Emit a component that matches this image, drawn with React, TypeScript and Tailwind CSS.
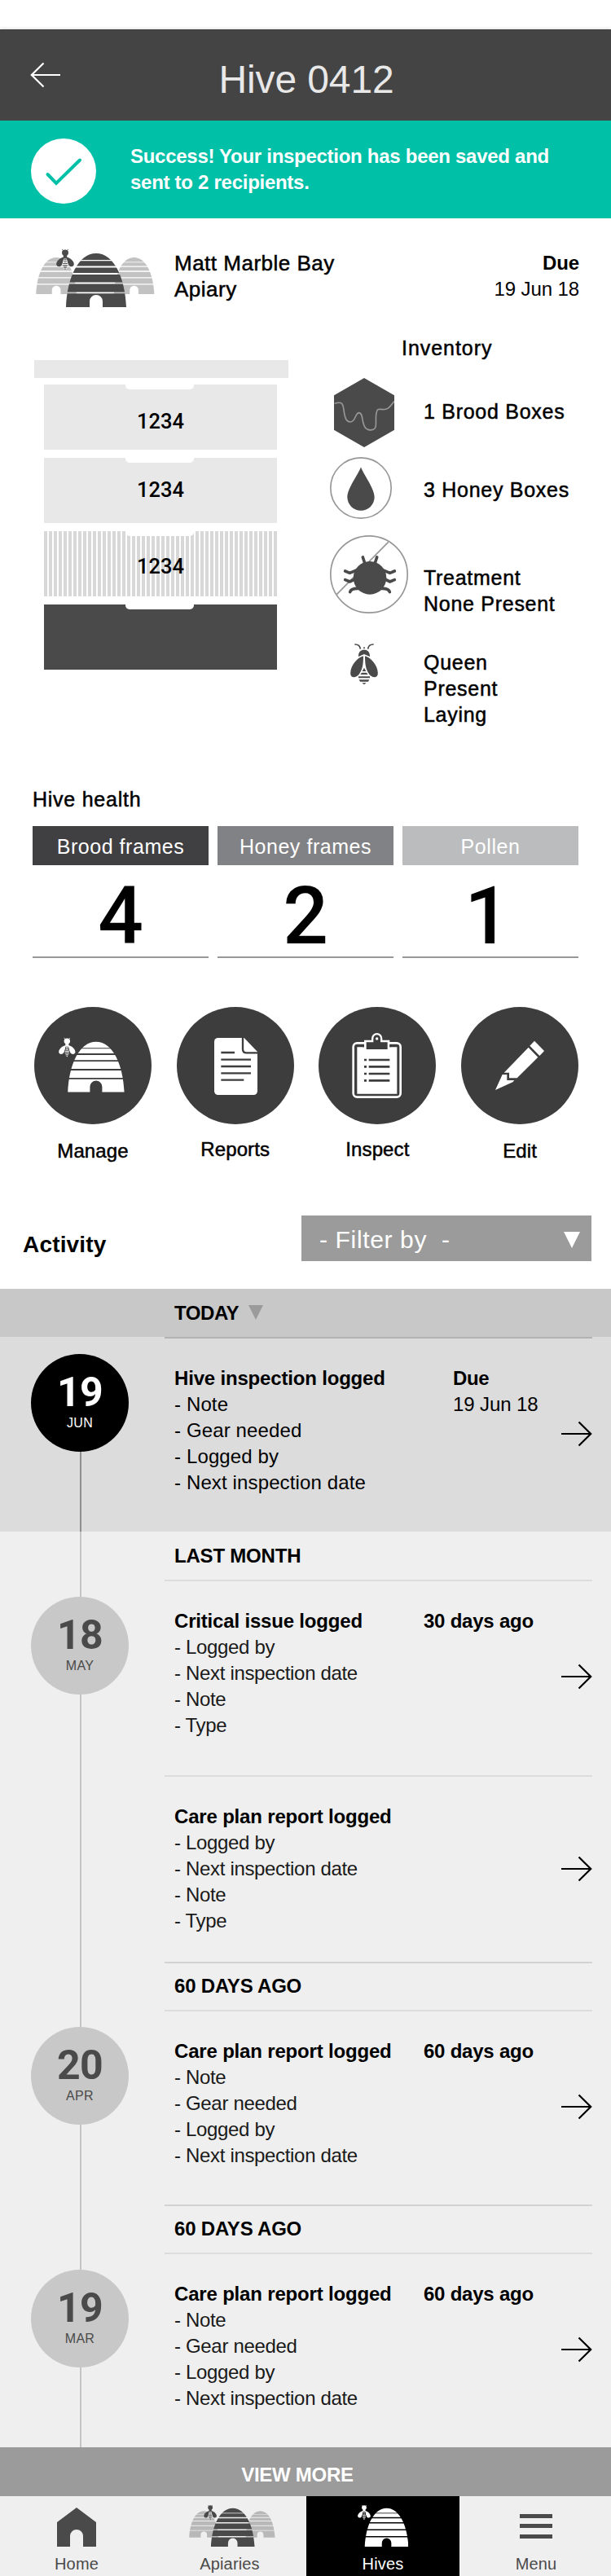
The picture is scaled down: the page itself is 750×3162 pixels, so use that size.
import React, { useId } from "react";

/* ---------- icons ---------- */

const HIVE_BANDS: [number, number][] = [
  [-1, 9],
  [9.2, 6.2],
  [17.4, 6.6],
  [26, 9.6],
  [37.6, 9.8],
  [49.3, 18],
];

function Hive({ color, transform }: { color: string; transform?: string }) {
  const id = useId();
  return (
    <g transform={transform}>
      <clipPath id={id}>
        {HIVE_BANDS.map(([y, h]) => (
          <rect key={y} x="-1" y={y} width="76" height={h} />
        ))}
      </clipPath>
      <path
        clipPath={`url(#${id})`}
        fill={color}
        d="M0 66C1.5 30 15 0 37 0S72.5 30 74 66H45V59a8 8 0 0 0-16 0V66Z"
      />
    </g>
  );
}

function SmallBee({ color, gap }: { color: string; gap: string }) {
  return (
    <g>
      <path d="M9 1.6 7 .3M13 1.6 15 .3" stroke={color} strokeWidth="0.8" fill="none" />
      <ellipse cx="11" cy="4.2" rx="4" ry="3.7" fill={color} />
      <path fill={color} d="M8.8 6h4.4v6H8.8z" />
      <path fill={color} d="M9.4 9.5C4.5 10.5 0 14.5.2 18.6c.2 3 4.6 3.8 6.6.6C8.2 17 9 13.5 9.4 9.5Z" />
      <path fill={color} d="M12.6 9.5c4.9 1 9.4 5 9.2 9.1-.2 3-4.6 3.8-6.6.6-1.4-2.2-2.2-5.7-2.6-9.7Z" />
      <path fill={gap} d="M9.3 11.5h3.4l2 7.5-2.2 5h-3l-2.2-5z" />
      <path
        fill={color}
        d="M9.5 12.3h3v1.2h-3zM9.2 14.7h3.6v1H9.2zM8.3 16.9h5.4v1.2H8.3zM8 19.2h6l-.3 1.2H8.3zM8.8 21.5h4.4l-.6 1.2H9.4zM10 23.6h2l-1 1.4z"
      />
    </g>
  );
}

function ApiaryIcon({ className, side, gap }: { className: string; side: string; gap: string }) {
  return (
    <svg viewBox="0 0 146 71" className={className}>
      <Hive color={side} transform="translate(.3 10) scale(.67 .68)" />
      <Hive color={side} transform="translate(95.8 10) scale(.67 .68)" />
      <Hive color="#4a4a4a" transform="translate(37 5)" />
      <g transform="translate(25 0)">
        <SmallBee color="#4a4a4a" gap={gap} />
      </g>
    </svg>
  );
}

function Arrow({ back = false }: { back?: boolean }) {
  return (
    <svg viewBox="0 0 38 32" className="block h-8 w-[38px]" fill="none" stroke={back ? "#fff" : "#000"} strokeWidth="2.2">
      {back ? <path d="M37 16H2M16.5 1.5 1.8 16l14.7 14.5" /> : <path d="M0 16H36M21.5 1.5 36.2 16 21.5 30.5" />}
    </svg>
  );
}

function BroodIcon() {
  return (
    <svg viewBox="105 192 222 255" className="h-[85px] w-[74px]">
      <path fill="#4a4a4a" d="M216 192 327 256V383L216 447 105 383V256Z" />
      <path
        fill="none"
        stroke="#979797"
        strokeWidth="5"
        d="M107 286C134 277 138 286 141 310C145 340 150 353 165 354C185 354 182 321 197 320C211 320 207 345 215 365C222 385 240 385 248 382C268 377 254 345 262 317C266 299 278 312 298 306C311 302 316 289 327 278"
      />
    </svg>
  );
}

function HoneyIcon() {
  return (
    <svg viewBox="90 483 228 228" className="size-[76px]">
      <circle cx="204" cy="597" r="111.5" fill="none" stroke="#979797" strokeWidth="5" />
      <path fill="#4a4a4a" d="M204 520C212 545 254 598 254 631A50 49 0 0 1 154 631C154 598 196 545 204 520Z" />
    </svg>
  );
}

function MiteIcon() {
  return (
    <svg viewBox="90 770 288 288" className="size-24">
      <g fill="none" stroke="#979797" strokeWidth="5">
        <circle cx="234" cy="914" r="141.5" />
        <path d="M115 988 305 795" />
      </g>
      <circle cx="237" cy="927" r="61" fill="#4a4a4a" />
      <path
        fill="none"
        stroke="#4a4a4a"
        strokeWidth="11"
        strokeLinecap="round"
        strokeLinejoin="round"
        d="M218 872 211 851M256 872 263 851M146 902 163 909 195 896M328 902 311 909 279 896M146 934 163 941 185 930M328 934 311 941 289 930M164 979Q167 965 195 966M310 979Q307 965 279 966"
      />
    </svg>
  );
}

function QueenIcon() {
  return (
    <svg viewBox="164 1170 102 150" className="h-[50px] w-[34px]" fill="#4a4a4a">
      <path fill="none" stroke="#4a4a4a" strokeWidth="5" d="M180 1173Q199 1172 201 1190M250 1173Q231 1172 229 1190" />
      <circle cx="215" cy="1186" r="3" />
      <path d="M194 1218C192 1184 238 1184 236 1218L215 1209Z" />
      <path d="M212 1216C190 1221 161 1254 165 1284C169 1299 187 1295 196 1283C208 1268 212 1250 212 1216Z" />
      <path d="M218 1216C240 1221 269 1254 265 1284C261 1299 243 1295 234 1283C222 1268 218 1250 218 1216Z" />
      <path d="M215 1259 222 1272H208ZM206 1277H224L229 1284H201ZM194 1291H236V1297H194ZM196 1303H234L230 1310H200ZM207 1315H223L215 1321Z" />
    </svg>
  );
}

const ACTION_ICON = "size-36 rounded-full bg-[#3d3d3d]";

function ManageIcon() {
  return (
    <svg viewBox="36 -12 432 432" className={ACTION_ICON}>
      <g transform="translate(126 102) scale(2.81)">
        <Hive color="#fff" transform="translate(12 5)" />
        <SmallBee color="#fff" gap="#3d3d3d" />
      </g>
    </svg>
  );
}

function ReportsIcon() {
  return (
    <svg viewBox="560 -12 432 432" className={ACTION_ICON}>
      <path fill="#fff" d="M712 102H808L857 153V298a14 14 0 0 1-14 14H712a14 14 0 0 1-14-14V116a14 14 0 0 1 14-14Z" />
      <g fill="none" stroke="#3d3d3d" strokeWidth="7">
        <path d="M803 100V143Q803 157 817 157H860" />
        <path d="M723 156H773M723 182H833M723 207H833M723 232H833M723 257H807" />
      </g>
    </svg>
  );
}

function InspectIcon() {
  return (
    <svg viewBox="5 -12 432 432" className={ACTION_ICON}>
      <rect x="133" y="121" width="174" height="199" rx="14" fill="none" stroke="#fff" strokeWidth="8" />
      <path fill="#fff" d="M147 136H294V308H147Z" />
      <path fill="#fff" d="M173 110H200V104A20 20 0 0 1 240 104V110H267V138H173Z" />
      <path fill="#3d3d3d" d="M181 118H207V104A13 13 0 0 1 233 104V118H259V144H181Z" />
      <path fill="#3d3d3d" d="M167 126h6v10h-6zM267 126h6v10h-6z" />
      <circle cx="220" cy="105" r="5" fill="#fff" />
      <path
        stroke="#3d3d3d"
        strokeWidth="8"
        d="M173 183H182M190 183H267M173 208H182M190 208H267M173 234H182M190 234H267M173 259H182M190 259H267"
      />
    </svg>
  );
}

function EditIcon() {
  return (
    <svg viewBox="528 -12 432 432" className={ACTION_ICON}>
      <g fill="#fff">
        <path d="M798 113 834 150 817 168 781 131Z" />
        <path d="M776 137 811 173 734 250H705V230H686Z" />
        <path d="M680 237H697V258H724L718 265 654 294Z" />
      </g>
    </svg>
  );
}

/* ---------- hive stack ---------- */

const medium = "[-webkit-text-stroke:0.5px_#000]";
const boxNumber = "text-center font-['Roboto',sans-serif] text-[25.5px] leading-8 font-medium";

function Notch() {
  return <div className="ml-[100px] h-1.5 w-[84px] rounded-b-[5px] bg-white" />;
}

function HiveStack() {
  return (
    <div className="mt-[31px] w-[312px]">
      <div className="h-[22px] bg-[#e8e8e8]" />
      <div className="mt-2 ml-3 flex w-[286px] flex-col gap-2.5">
        <div className="h-20 bg-[#e8e8e8]">
          <Notch />
          <p className={`pt-[23px] ${boxNumber}`}>1234</p>
        </div>
        <div className="h-20 bg-[#e8e8e8]">
          <Notch />
          <p className={`pt-[17px] ${boxNumber}`}>1234</p>
        </div>
        <div className="h-20 bg-[repeating-linear-gradient(90deg,#d8d8d8_0px,#d8d8d8_4px,#fff_4px,#fff_6px)]">
          <Notch />
          <p className={`pt-[21px] ${boxNumber}`}>1234</p>
        </div>
        <div className="h-20 bg-[#4a4a4a]">
          <Notch />
        </div>
      </div>
    </div>
  );
}

/* ---------- health ---------- */

function HealthTile({ label, value, tone, shift }: { label: string; value: string; tone: string; shift: string }) {
  return (
    <div className="w-[216px] border-b-2 border-[#979797] text-center">
      <div className={`h-12 pt-px text-[25px] leading-12 tracking-[0.55px] text-white ${tone}`}>{label}</div>
      <div className={`h-28 font-['Roboto',sans-serif] text-[98px] leading-[125px] font-medium ${shift}`}>{value}</div>
    </div>
  );
}

function Action({ icon, label, gap }: { icon: React.ReactNode; label: string; gap: string }) {
  return (
    <div className={`flex w-36 flex-col items-center ${gap}`}>
      {icon}
      <span className={`text-2xl leading-8 tracking-[0.1px] ${medium}`}>{label}</span>
    </div>
  );
}

/* ---------- timeline ---------- */

function Line({ className }: { className: string }) {
  return <div className={`ml-[98px] w-[2px] ${className}`} />;
}

function Period({ label, first = false }: { label: string; first?: boolean }) {
  return (
    <div className="flex h-[59px]">
      <div className="flex w-[202px] flex-col">
        <Line className="flex-1 bg-[#c4c4c4]" />
      </div>
      <h3
        className={`w-[525px] pl-3 text-2xl leading-8 font-bold tracking-[-0.2px] ${
          first ? "pt-[14px]" : "border-t-2 border-[#d2d2d2] pt-3"
        }`}
      >
        {label}
      </h3>
    </div>
  );
}

type EntryProps = {
  day?: string;
  month?: string;
  title: string;
  lines: string[];
  when?: string;
  due?: string;
  active?: boolean;
  height: string;
  arrowTop?: string;
};

function Entry({ day, month, title, lines, when, due, active = false, height, arrowTop = "mt-[101px]" }: EntryProps) {
  return (
    <div className={`flex ${height} ${active ? "bg-[#dcdcdc]" : ""}`}>
      <div className="flex w-[202px] flex-col">
        {day && (
          <>
            <Line className={`h-[21px] ${active ? "" : "bg-[#c4c4c4]"}`} />
            <div
              className={`ml-[38px] flex size-[120px] flex-col items-center rounded-full ${
                active ? "bg-black text-white" : "bg-[#c8c8c8] text-[#4a4a4a]"
              }`}
            >
              <span className="mt-[18px] font-['Roboto',sans-serif] text-[50px] leading-[58px] font-bold tracking-[-0.8px]">
                {day}
              </span>
              <span className="-mt-px text-base leading-5 tracking-[0.3px]">{month}</span>
            </div>
          </>
        )}
        <Line className={`flex-1 ${active ? "bg-[#8f8f8f]" : "bg-[#c4c4c4]"}`} />
      </div>
      <div className={`flex w-[525px] border-t-2 pl-3 text-2xl leading-8 ${active ? "border-[#b2b2b2]" : "border-[#dcdcdc]"}`}>
        <div className="w-[306px] pt-[33px]">
          <h4 className="font-bold tracking-[-0.18px]">{title}</h4>
          <ul className={active ? "tracking-[0.13px]" : "tracking-[-0.33px] text-[#1a1a1a]"}>
            {lines.map((l) => (
              <li key={l}>- {l}</li>
            ))}
          </ul>
        </div>
        <div className="pt-[33px] whitespace-nowrap">
          {when && <p className="font-bold tracking-[-0.23px]">{when}</p>}
          {due && (
            <div className="pl-9">
              <p className="font-bold tracking-[-0.4px]">Due</p>
              <p className="tracking-[-0.1px]">{due}</p>
            </div>
          )}
        </div>
        <div className={`ml-auto ${arrowTop}`}>
          <Arrow />
        </div>
      </div>
    </div>
  );
}

/* ---------- bottom navigation ---------- */

function NavItem({ icon, label, active = false }: { icon: React.ReactNode; label: string; active?: boolean }) {
  return (
    <div className={`flex w-47 shrink-0 flex-col items-center pt-2.5 ${active ? "bg-black text-white" : "text-[#4a4a4a]"}`}>
      <div className="flex h-[52px] items-end">{icon}</div>
      <span className="mt-[9px] text-xl leading-6 tracking-[0.15px]">{label}</span>
    </div>
  );
}

export default function App() {
  return (
    <div className="flex h-[3162px] w-[750px] flex-col overflow-hidden bg-white font-['Liberation_Sans',Arial,sans-serif] text-black">
      <header className="mt-9 flex h-28 shrink-0 bg-[#444] shadow-[0_0_5px_rgba(0,0,0,0.18)]">
        <div className="w-[115px] pt-10 pl-[37px]">
          <Arrow back />
        </div>
        <h1 className="w-[522px] pt-[38px] text-center text-5xl leading-12 tracking-[-0.1px] text-[#e8e8e8]">Hive 0412</h1>
      </header>

      <section className="z-10 flex h-30 shrink-0 bg-[#01c0a8] pt-[22px] pl-[38px]">
        <svg viewBox="0 0 80 80" className="size-20 rounded-full bg-white">
          <path d="M20.500 44 31 55 60 26.500" fill="none" stroke="#01c0a8" strokeWidth="4" strokeLinecap="round" />
        </svg>
        <p className="ml-[42px] pt-1.5 text-2xl leading-8 font-bold tracking-[-0.28px] whitespace-nowrap text-white">
          Success! Your inspection has been saved and
          <br />
          sent to 2 recipients.
        </p>
      </section>

      <section className="flex h-[143px] shrink-0 pt-[38px] pr-[39px] pl-11">
        <ApiaryIcon className="h-[71px] w-[146px]" side="#c2c2c2" gap="#fff" />
        <h2 className={`ml-6 pt-px text-[26px] leading-8 tracking-[0.5px] ${medium}`}>
          Matt Marble Bay
          <br />
          Apiary
        </h2>
        <div className="ml-auto pt-px text-right text-2xl leading-8 tracking-[-0.1px]">
          <p className="font-bold">Due</p>
          <p>19 Jun 18</p>
        </div>
      </section>

      <section className="flex h-[554px] shrink-0 pl-[42px]">
        <HiveStack />
        <div className={`ml-[51px] text-[25px] leading-8 tracking-[0.72px] ${medium}`}>
          <h2 className="pl-[88px] tracking-[0.95px]">Inventory</h2>
          <div className="mt-[21px] flex h-[85px]">
            <div className="w-[115px] pl-[5px]">
              <BroodIcon />
            </div>
            <p className="pt-[25px]">1 Brood Boxes</p>
          </div>
          <div className="mt-3 flex h-[76px]">
            <div className="w-[115px]">
              <HoneyIcon />
            </div>
            <p className="pt-6">3 Honey Boxes</p>
          </div>
          <div className="mt-5 flex h-24">
            <div className="w-[115px]">
              <MiteIcon />
            </div>
            <p className="pt-9">
              Treatment
              <br />
              None Present
            </p>
          </div>
          <div className="mt-[37px] flex">
            <div className="w-[115px] pl-[25px]">
              <QueenIcon />
            </div>
            <p className="pt-[7px]">
              Queen
              <br />
              Present
              <br />
              Laying
            </p>
          </div>
        </div>
      </section>

      <section className="h-[271px] shrink-0 pl-10">
        <h2 className={`text-[25px] leading-8 tracking-[0.75px] ${medium}`}>Hive health</h2>
        <div className="mt-[17px] flex gap-[11px]">
          <HealthTile label="Brood frames" value="4" tone="bg-[#404042]" shift="" />
          <HealthTile label="Honey frames" value="2" tone="bg-[#818285]" shift="" />
          <HealthTile label="Pollen" value="1" tone="bg-[#bbbcbe]" shift="pr-2" />
        </div>
      </section>

      <section className="flex h-64 shrink-0 gap-[30.7px] pl-[42px]">
        <Action icon={<ManageIcon />} label="Manage" gap="gap-[17px]" />
        <Action icon={<ReportsIcon />} label="Reports" gap="gap-[15px]" />
        <Action icon={<InspectIcon />} label="Inspect" gap="gap-[15px]" />
        <Action icon={<EditIcon />} label="Edit" gap="gap-[17px]" />
      </section>

      <section className="flex h-[90px] shrink-0 justify-between pr-6 pl-7">
        <h2 className="pt-5 text-[28px] leading-8 font-bold tracking-[0.18px]">Activity</h2>
        <button className="flex h-14 w-[356px] items-start justify-between bg-[#9b9b9b] pt-0.5 pr-3.5 pl-[22px] text-[30px] leading-14 tracking-[0.64px] whitespace-pre text-white">
          <span>{"- Filter by  -"}</span>
          <svg viewBox="0 0 20 20" className="mt-[18px] size-5" fill="#fff">
            <path d="M0 0H20L10 20Z" />
          </svg>
        </button>
      </section>

      <section className="flex h-[59px] shrink-0 bg-[#c8c8c8] pt-[14px] pl-[214px]">
        <h3 className="text-2xl leading-8 font-bold tracking-[-0.45px]">TODAY</h3>
        <svg viewBox="0 0 18 18" className="mt-1.5 ml-3 size-[18px]" fill="#9b9b9b">
          <path d="M0 0H18L9 18Z" />
        </svg>
      </section>

      <section className="shrink-0 bg-[#efefef]">
        <Entry
          active
          day="19"
          month="JUN"
          title="Hive inspection logged"
          lines={["Note", "Gear needed", "Logged by", "Next inspection date"]}
          due="19 Jun 18"
          height="h-[239px]"
        />
        <Period label="LAST MONTH" first />
        <Entry
          day="18"
          month="MAY"
          title="Critical issue logged"
          lines={["Logged by", "Next inspection date", "Note", "Type"]}
          when="30 days ago"
          height="h-[240px]"
        />
        <Entry
          title="Care plan report logged"
          lines={["Logged by", "Next inspection date", "Note", "Type"]}
          height="h-[229px]"
          arrowTop="mt-[97px]"
        />
        <Period label="60 DAYS AGO" />
        <Entry
          day="20"
          month="APR"
          title="Care plan report logged"
          lines={["Note", "Gear needed", "Logged by", "Next inspection date"]}
          when="60 days ago"
          height="h-[239px]"
        />
        <Period label="60 DAYS AGO" />
        <Entry
          day="19"
          month="MAR"
          title="Care plan report logged"
          lines={["Note", "Gear needed", "Logged by", "Next inspection date"]}
          when="60 days ago"
          height="h-[239px]"
        />
      </section>

      <button className="h-15 shrink-0 bg-[#9b9b9b] pt-2 pr-5 text-2xl font-bold tracking-[-0.27px] text-white">VIEW MORE</button>

      <nav className="flex h-[98px] shrink-0 bg-[#efefef]">
        <NavItem
          label="Home"
          icon={
            <svg viewBox="0 0 48 48" className="size-12" fill="#4a4a4a">
              <path d="M24 0 48 18V48H32V35a8 8 0 0 0-16 0V48H0V18Z" />
            </svg>
          }
        />
        <NavItem label="Apiaries" icon={<ApiaryIcon className="ml-1.5 h-[51.5px] w-[106px]" side="#b8b8b8" gap="#efefef" />} />
        <NavItem
          active
          label="Hives"
          icon={
            <svg viewBox="0 0 86 71" className="h-[51.5px] w-[62.4px]">
              <Hive color="#fff" transform="translate(12 5)" />
              <SmallBee color="#fff" gap="#000" />
            </svg>
          }
        />
        <NavItem
          label="Menu"
          icon={
            <svg viewBox="0 0 40 40" className="size-10" fill="#4a4a4a">
              <path d="M0 0H40V5H0ZM0 12H40V17H0ZM0 25H40V30H0Z" />
            </svg>
          }
        />
      </nav>
    </div>
  );
}
